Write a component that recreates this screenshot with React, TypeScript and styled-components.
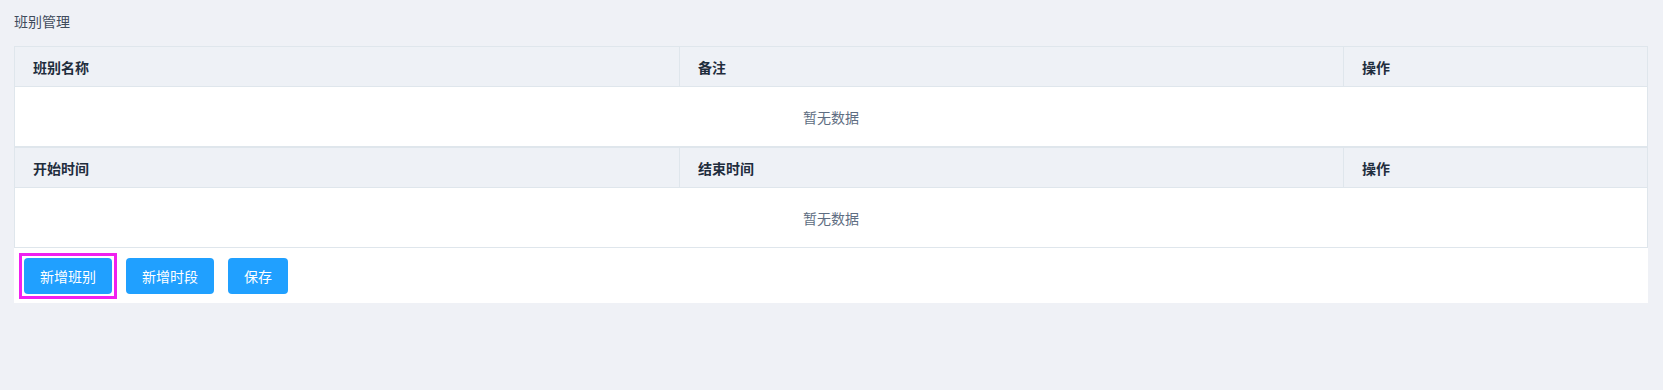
import React from "react";
import styled, { createGlobalStyle } from "styled-components";

const Global = createGlobalStyle`
  html, body {
    margin: 0;
    padding: 0;
    background: #eff1f6;
    font-family: "Noto Sans CJK SC", "Noto Sans", sans-serif;
  }
`;

const Page = styled.div`
  padding: 11px 15px 0 14px;
  min-height: 390px;
  box-sizing: border-box;
  background: #eff1f6;
`;

const Title = styled.div`
  font-size: 14px;
  line-height: 20px;
  height: 20px;
  color: #3f4b5c;
  margin-bottom: 15px;
`;

const Table = styled.div`
  border: 1px solid #dfe6ec;
  background: #fff;
`;

const HeadRow = styled.div`
  display: grid;
  grid-template-columns: 665px 664px 1fr;
  height: 39px;
  background: #eef1f6;
  border-bottom: 1px solid #dfe6ec;
`;

const HeadCell = styled.div<{ $last?: boolean }>`
  display: flex;
  align-items: center;
  padding-left: 18px;
  font-size: 14px;
  font-weight: bold;
  color: #1f2d3d;
  border-right: ${(p) => (p.$last ? "none" : "1px solid #dfe6ec")};
`;

const Empty = styled.div`
  height: 59px;
  display: flex;
  align-items: center;
  justify-content: center;
  font-size: 14px;
  color: #5e6d82;
`;

const ButtonRow = styled.div`
  background: #fff;
  display: flex;
  gap: 14px;
  padding: 10px 10px 9px;
  height: 36px;
`;

const Button = styled.button<{ $focused?: boolean }>`
  position: relative;
  height: 36px;
  padding: 0 16px;
  border: none;
  border-radius: 4px;
  background: #20a0ff;
  color: #fff;
  font-family: inherit;
  font-size: 14px;
  cursor: pointer;
  outline: none;
  &::after {
    content: "";
    display: ${(p) => (p.$focused ? "block" : "none")};
    position: absolute;
    inset: -5px;
    border: 3px solid #f020f0;
    pointer-events: none;
  }
`;

const tables = [
  ["班别名称", "备注", "操作"],
  ["开始时间", "结束时间", "操作"],
];

export default function App() {
  return (
    <>
      <Global />
      <Page>
        <Title>班别管理</Title>
        {tables.map((cols, i) => (
          <Table key={i}>
            <HeadRow>
              {cols.map((c, j) => (
                <HeadCell key={j} $last={j === cols.length - 1}>
                  {c}
                </HeadCell>
              ))}
            </HeadRow>
            <Empty>暂无数据</Empty>
          </Table>
        ))}
        <ButtonRow>
          <Button $focused>新增班别</Button>
          <Button>新增时段</Button>
          <Button>保存</Button>
        </ButtonRow>
      </Page>
    </>
  );
}
